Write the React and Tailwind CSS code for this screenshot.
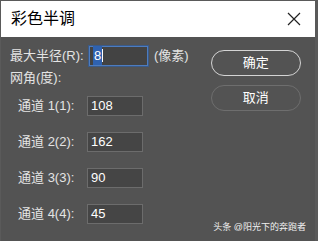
import React from 'react';

const font = { fontFamily: '"Liberation Sans", "Noto Sans CJK SC", sans-serif' };

function Field({ value, active }) {
  return (
    <div
      className={
        'h-[20px] flex items-center px-[3px] text-[13px] text-white ' +
        (active
          ? 'w-[59px] border border-[#4d7cbf] bg-[#434343] shadow-[0_0_0_1px_#3a5a88]'
          : 'w-[56px] border border-[#6c6c6c] bg-[#454545]')
      }
    >
      {active ? <span className="bg-[#2f62b0] px-[1px]">{value}</span> : value}
      {active && <span className="w-px h-[13px] bg-white" />}
    </div>
  );
}

function Channel({ n, value }) {
  return (
    <div className="flex items-center h-[20px]">
      <span className="w-[86px] pl-[17px] text-[13px] text-[#e4e4e4] whitespace-nowrap">
        通道 {n}({n}):
      </span>
      <Field value={value} />
    </div>
  );
}

export default function App() {
  return (
    <div className="w-[318px] h-[241px] bg-[#5a5a5a] pl-px pr-[3px] pt-px" style={font}>
      <div className="h-[36px] bg-white flex items-center justify-between pl-[10px] pr-[14px]">
        <span className="text-[16px] text-black">彩色半调</span>
        <svg width="14" height="14" viewBox="0 0 14 14">
          <path d="M1 1L13 13M13 1L1 13" stroke="#222" strokeWidth="1.2" />
        </svg>
      </div>
      <div className="h-[204px] bg-[#535353] relative">
        <div className="flex">
          <div className="flex flex-col">
            <div className="flex items-center mt-[9px] h-[19px]">
              <span className="w-[88px] pl-[9px] text-[13px] text-[#e4e4e4] whitespace-nowrap">最大半径(R):</span>
              <Field value="8" active />
              <span className="ml-[6px] text-[13px] text-[#e4e4e4]">(像素)</span>
            </div>
            <div className="mt-[5px] pl-[9px] text-[13px] text-[#e4e4e4] h-[16px] leading-[16px]">网角(度):</div>
            <div className="flex flex-col gap-[16px] mt-[10px]">
              <Channel n={1} value="108" />
              <Channel n={2} value="162" />
              <Channel n={3} value="90" />
              <Channel n={4} value="45" />
            </div>
          </div>
          <div className="flex flex-col gap-[9px] ml-[22px] mt-[13px]">
            <button className="w-[90px] h-[26px] rounded-full border-[1.5px] border-[#d4d4d4] text-[13px] text-white">
              确定
            </button>
            <button className="w-[90px] h-[26px] rounded-full border-[1.5px] border-[#6e6e6e] text-[13px] text-white">
              取消
            </button>
          </div>
        </div>
        <div className="absolute right-[9px] bottom-[7px] text-[9px] text-[#f0f0f0]">头条 @阳光下的奔跑者</div>
      </div>
    </div>
  );
}
